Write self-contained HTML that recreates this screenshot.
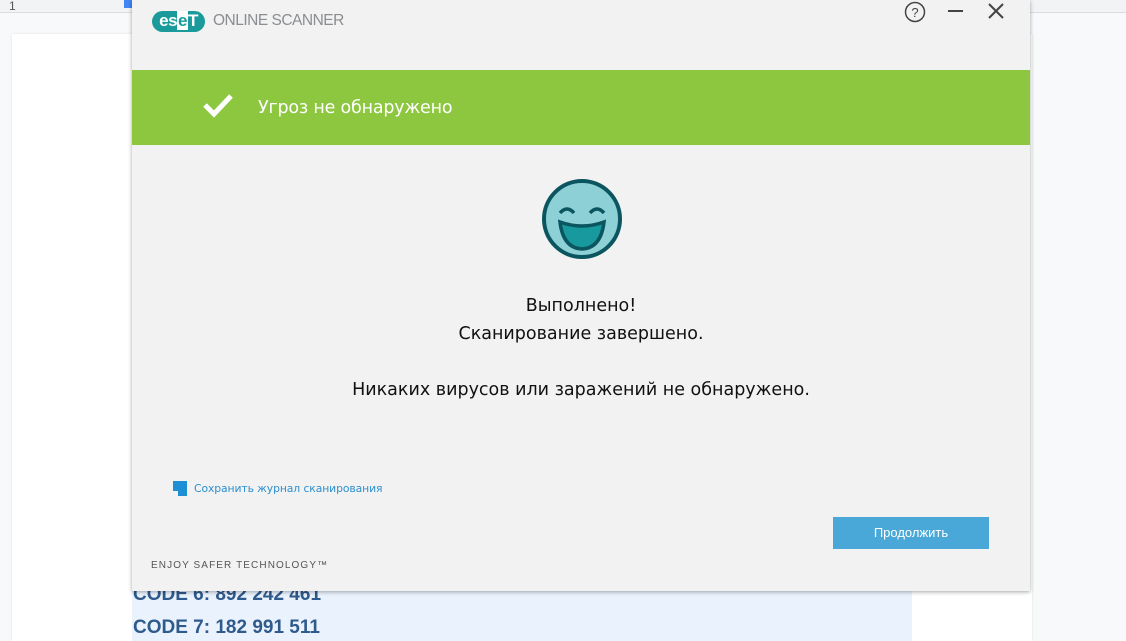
<!DOCTYPE html>
<html><head><meta charset="utf-8"><style>
*{margin:0;padding:0;box-sizing:border-box}
html,body{width:1126px;height:641px;overflow:hidden}
body{background:#f8f9fa;font-family:"Liberation Sans","DejaVu Sans",sans-serif;position:relative}
.ruler{position:absolute;left:0;top:0;width:1126px;height:13px;background:#f1f3f4;border-bottom:1px solid #dadce0}
.page{position:absolute;left:12px;top:34px;width:1020px;height:607px;background:#fff;box-shadow:0 0 2px #ddd}
.hl{position:absolute;left:132px;top:582px;width:780px;height:59px;background:#eaf2fd}
.code{position:absolute;left:133px;font-weight:bold;font-size:19px;color:#2e5a8c}
.dlg{position:absolute;left:132px;top:0;width:898px;height:591px;background:#f2f2f2;box-shadow:0 1px 4px rgba(0,0,0,.35)}
.bar{position:absolute;left:0;top:70px;width:898px;height:75px;background:#8dc63f;color:#fff}
.t{position:absolute;width:898px;text-align:center;color:#111;font-family:"DejaVu Sans","Liberation Sans",sans-serif;font-size:17.5px}
.btn{position:absolute;left:701px;top:517px;width:156px;height:32px;background:#4aa8d8;color:#fff;font-size:13px;text-align:center;line-height:32px}
</style></head><body>
<div class="ruler"><span style="position:absolute;left:9px;top:-1px;font-size:12px;color:#555">1</span>
<div style="position:absolute;left:124px;top:0;width:8px;height:8px;background:#4285f4"></div></div>
<div class="page"></div>
<div class="hl"></div>
<div class="code" style="top:584px">CODE 6: 892 242 461</div>
<div class="code" style="top:617px">CODE 7: 182 991 511</div>
<div class="dlg">
 <div style="position:absolute;left:20px;top:11px;width:53px;height:21px;border-radius:11px;background:#1a9a9a;color:#fff;font-weight:bold;font-size:17px;line-height:20px;text-align:center;letter-spacing:-0.5px">es<span style="background:#fff;color:#1a9a9a;padding:0 1px">e</span>T</div>
 <div style="position:absolute;left:81px;top:12px;font-size:15.5px;color:#8a8d91;letter-spacing:-0.5px">ONLINE SCANNER</div>
 <svg style="position:absolute;left:770px;top:0" width="110" height="24">
  <circle cx="13" cy="12" r="9.5" fill="none" stroke="#444" stroke-width="1.5"/>
  <text x="13" y="17" text-anchor="middle" font-size="13" font-family="Liberation Sans" fill="#444">?</text>
  <line x1="46" y1="11" x2="61" y2="11" stroke="#444" stroke-width="2"/>
  <line x1="87" y1="4" x2="101" y2="18" stroke="#444" stroke-width="2"/>
  <line x1="101" y1="4" x2="87" y2="18" stroke="#444" stroke-width="2"/>
 </svg>
 <div class="bar">
  <svg style="position:absolute;left:70px;top:22px" width="32" height="26"><path d="M3 13 L12 22 L29 4" fill="none" stroke="#fff" stroke-width="5"/></svg>
  <div style="position:absolute;left:126px;top:28px;font-family:'DejaVu Sans','Liberation Sans',sans-serif;font-size:17.5px;letter-spacing:-0.2px">Угроз не обнаружено</div>
 </div>
 <svg style="position:absolute;left:409px;top:178px" width="82" height="82">
  <circle cx="41" cy="41" r="38" fill="#8dd0d5" stroke="#0b5560" stroke-width="4"/>
  <path d="M19 35 Q26 27 33 35 M49 35 Q56 27 63 35" fill="none" stroke="#0b5560" stroke-width="3.5"/>
  <path d="M19 44 Q41 52 63 44 Q60 70 41 71 Q22 70 19 44 Z" fill="#17999d" stroke="#0b5560" stroke-width="3.5"/>
 </svg>
 <div class="t" style="top:296px">Выполнено!</div>
 <div class="t" style="top:324px">Сканирование завершено.</div>
 <div class="t" style="top:380px">Никаких вирусов или заражений не обнаружено.</div>
 <div style="position:absolute;left:41px;top:481px;width:14px;height:15px;background:#1e8fd4"></div>
 <div style="position:absolute;left:41px;top:491px;width:5px;height:5px;background:#f2f2f2"></div>
 <div style="position:absolute;left:62px;top:482px;color:#2d8fcf;font-family:'DejaVu Sans',sans-serif;font-size:10.8px;letter-spacing:-0.1px">Сохранить журнал сканирования</div>
 <div class="btn">Продолжить</div>
 <div style="position:absolute;left:19px;top:560px;font-size:10px;color:#555;letter-spacing:1.1px">ENJOY SAFER TECHNOLOGY™</div>
</div>
</body></html>
